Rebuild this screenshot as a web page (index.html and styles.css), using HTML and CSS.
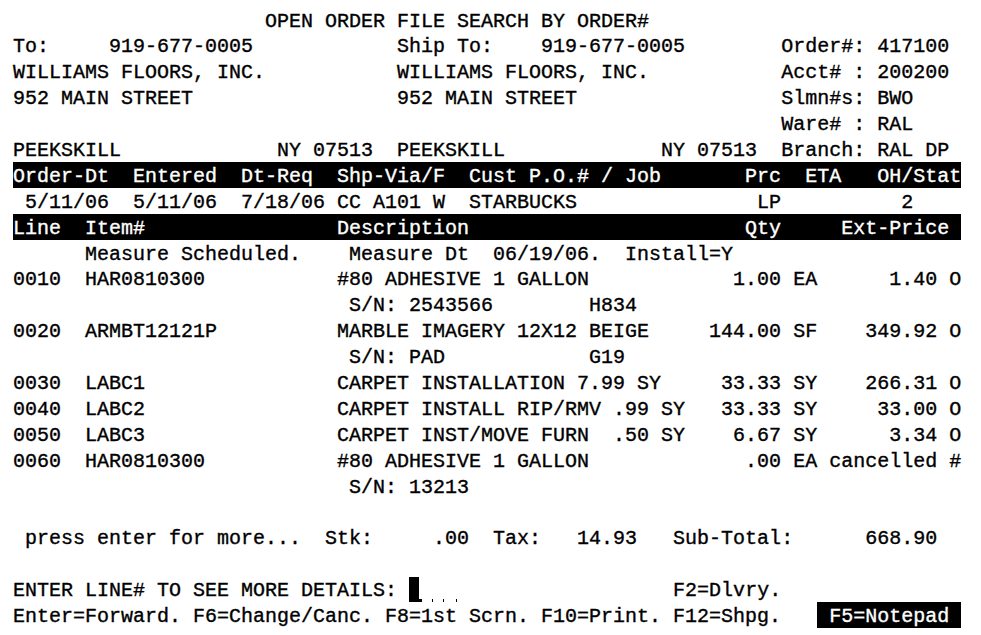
FILE: index.html
```html
<!DOCTYPE html>
<html lang="en">
<head>
<meta charset="utf-8">
<title>Open Order File Search by Order#</title>
<link rel="stylesheet" href="styles.css">
</head>
<body>
<div class="screen">
<div class="row">                     OPEN ORDER FILE SEARCH BY ORDER#</div>
<div class="row">To:     919-677-0005            Ship To:    919-677-0005        Order#: 417100</div>
<div class="row">WILLIAMS FLOORS, INC.           WILLIAMS FLOORS, INC.           Acct# : 200200</div>
<div class="row">952 MAIN STREET                 952 MAIN STREET                 Slmn#s: BWO</div>
<div class="row">                                                                Ware# : RAL</div>
<div class="row">PEEKSKILL             NY 07513  PEEKSKILL             NY 07513  Branch: RAL DP</div>
<div class="row bar">Order-Dt  Entered  Dt-Req  Shp-Via/F  Cust P.O.# / Job       Prc  ETA   OH/Stat</div>
<div class="row"> 5/11/06  5/11/06  7/18/06 CC A101 W  STARBUCKS               LP          2</div>
<div class="row bar">Line  Item#                Description                       Qty     Ext-Price </div>
<div class="row">      Measure Scheduled.    Measure Dt  06/19/06.  Install=Y</div>
<div class="row">0010  HAR0810300           #80 ADHESIVE 1 GALLON            1.00 EA      1.40 O</div>
<div class="row">                            S/N: 2543566        H834</div>
<div class="row">0020  ARMBT12121P          MARBLE IMAGERY 12X12 BEIGE     144.00 SF    349.92 O</div>
<div class="row">                            S/N: PAD            G19</div>
<div class="row">0030  LABC1                CARPET INSTALLATION 7.99 SY     33.33 SY    266.31 O</div>
<div class="row">0040  LABC2                CARPET INSTALL RIP/RMV .99 SY   33.33 SY     33.00 O</div>
<div class="row">0050  LABC3                CARPET INST/MOVE FURN  .50 SY    6.67 SY      3.34 O</div>
<div class="row">0060  HAR0810300           #80 ADHESIVE 1 GALLON             .00 EA cancelled #</div>
<div class="row">                            S/N: 13213</div>
<div class="row"></div>
<div class="row"> press enter for more...  Stk:     .00  Tax:   14.93   Sub-Total:      668.90</div>
<div class="row"></div>
<div class="row">ENTER LINE# TO SEE MORE DETAILS: <span class="field"></span>                  F2=Dlvry.</div>
<div class="row">Enter=Forward. F6=Change/Canc. F8=1st Scrn. F10=Print. F12=Shpg.   <span class="rev"> F5=Notepad </span></div>
</div>
</body>
</html>
```
FILE: styles.css
```css
html, body {
  margin: 0;
  background: #ffffff;
}

.screen {
  padding: 7px 0 0 13px;
  font-family: "Liberation Mono", "DejaVu Sans Mono", monospace;
  font-size: 20px;
  color: #000000;
  -webkit-text-stroke: 0.35px currentColor;
}

.row {
  box-sizing: border-box;
  height: 25.9px;
  padding-top: 1.5px;
  line-height: 25.9px;
  white-space: pre;
}

.bar {
  width: fit-content;
  background: #000000;
  color: #ffffff;
}

.rev {
  display: inline-block;
  vertical-align: top;
  height: 25.9px;
  margin-top: -1.5px;
  padding-top: 1.5px;
  box-sizing: border-box;
  line-height: 25.9px;
  overflow: hidden;
  background: #000000;
  color: #ffffff;
}

.field {
  display: inline-block;
  vertical-align: top;
  width: 48px;
  height: 25.9px;
  margin-top: -1.5px;
  background:
    linear-gradient(#000, #000) 0 0 / 10px 23px no-repeat,
    linear-gradient(#000, #000) 0 22px / 13px 3px no-repeat,
    linear-gradient(#000, #000) 23px 22px / 1px 3px no-repeat,
    linear-gradient(#000, #000) 34px 22px / 1px 3px no-repeat,
    linear-gradient(#000, #000) 47px 22px / 1px 3px no-repeat;
}
```
